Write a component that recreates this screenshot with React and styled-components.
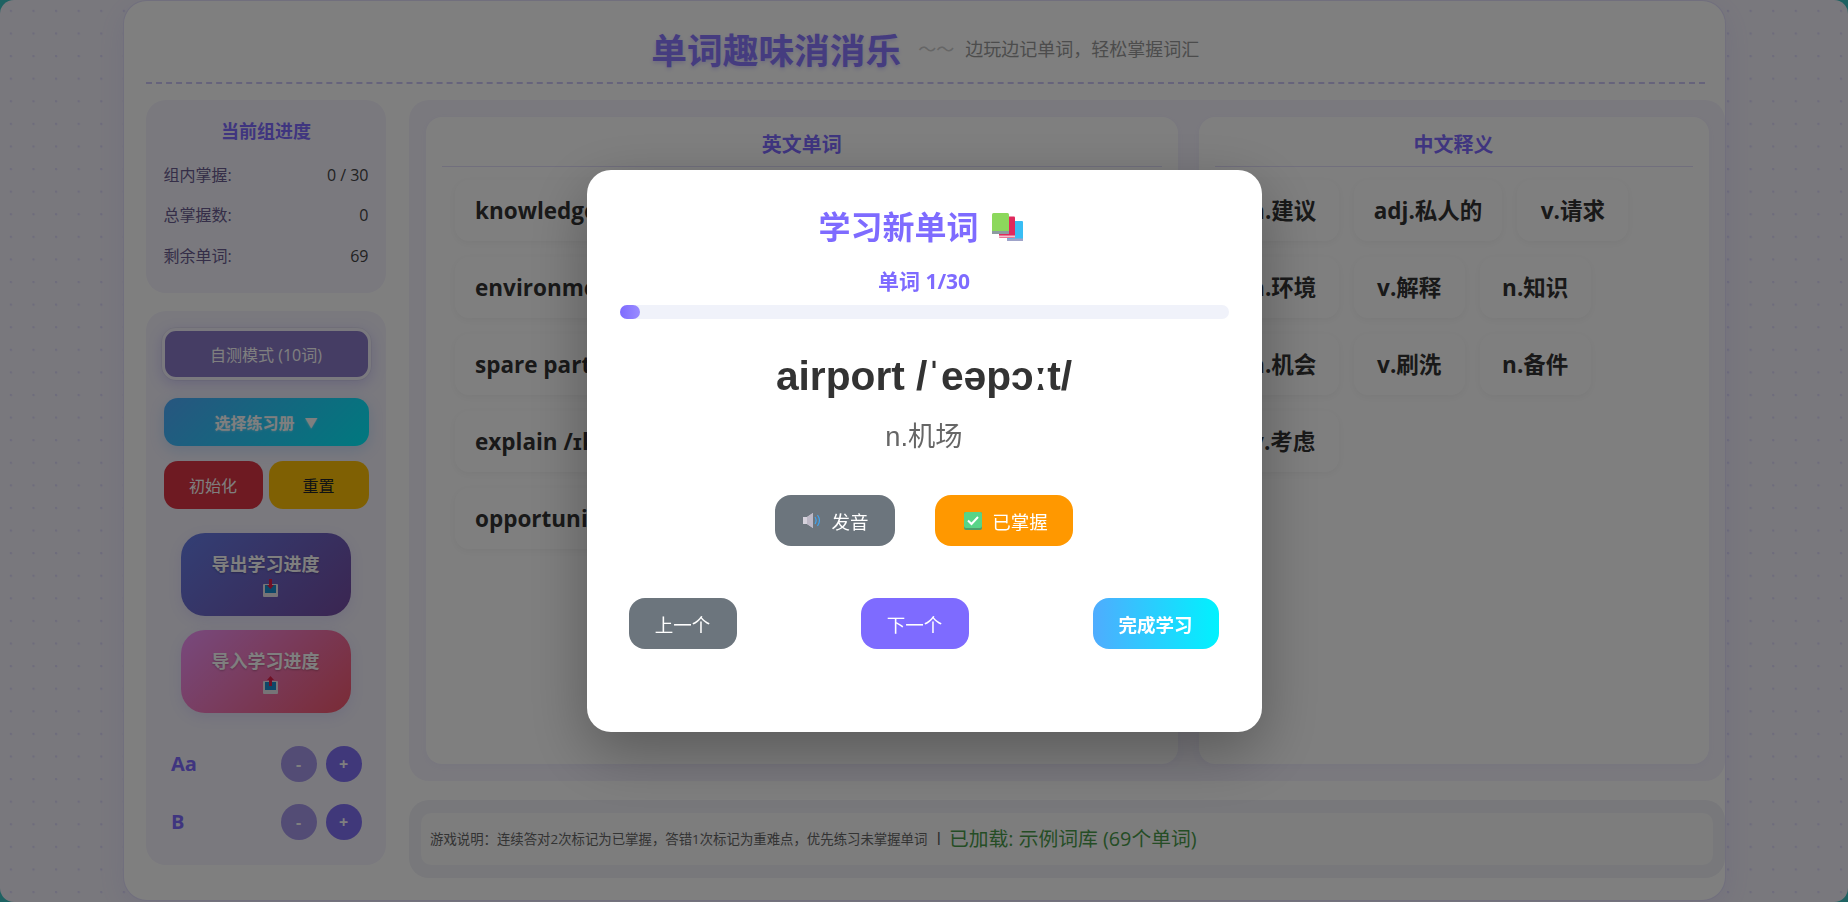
import styled, { createGlobalStyle } from 'styled-components';

const GlobalStyle = createGlobalStyle`
  html, body {
    margin: 0;
    height: 100%;
    overflow: hidden;
    background: #3cc4c4;
  }
  * { box-sizing: border-box; }
  body {
    font-family: "Open Sans", "Noto Sans CJK SC", sans-serif;
  }
`;

const Page = styled.div`
  height: 902px;
  border-radius: 14px;
  overflow: hidden;
  background-color: #f3f1fb;
  background-image: radial-gradient(circle at 11px 11px, rgba(108, 92, 231, 0.16) 1px, transparent 1.5px);
  background-size: 22.6px 22.6px;
`;

const Container = styled.div`
  width: 1603px;
  height: 901px;
  margin: 0 auto;
  padding: 0 0 0 22.5px;
  background: #fff;
  border: 1px solid rgba(108, 92, 231, 0.2);
  border-radius: 24px;
  box-shadow: 0 8px 32px rgba(108, 92, 231, 0.1);
  overflow: hidden;
`;

const Header = styled.header`
  display: flex;
  align-items: center;
  justify-content: center;
  height: 83px;
  margin-right: 20px;
  padding-top: 13px;
  border-bottom: 2px dashed rgba(108, 92, 231, 0.35);
`;

const Title = styled.h1`
  margin: 0 17px 0 0;
  font-size: 35.7px;
  font-weight: 700;
  color: #8a78ff;
  text-shadow: 0 2px 4px rgba(126, 107, 255, 0.3);
`;

const Tagline = styled.span`
  font-size: 18px;
  color: #999;
`;

const Tilde = styled.span`
  margin-right: 11px;
  font-size: 18px;
  color: #ccc;
`;

const Body = styled.div`
  display: flex;
  gap: 23px;
  margin-top: 16px;
`;

const Sidebar = styled.aside`
  display: flex;
  flex-direction: column;
  gap: 18px;
  width: 240px;
  flex-shrink: 0;
`;

const SideCard = styled.section`
  padding: ${p => p.$pad || '17px 17.5px'};
  background: #f4f2fd;
  border-radius: 20px;
`;

const SideTitle = styled.h3`
  margin: 1.5px 0 20px;
  text-align: center;
  font-size: 18px;
  line-height: 25px;
  font-weight: 700;
  color: #7e6bff;
`;

const StatRow = styled.div`
  display: flex;
  justify-content: space-between;
  margin-bottom: 18.5px;
  font-size: 16px;
  line-height: 22px;
  color: #6a5c90;

  &:last-child { margin-bottom: 9px; }

  b {
    font-weight: 400;
    color: #444;
  }
`;

const Button = styled.button`
  display: flex;
  align-items: center;
  justify-content: center;
  border: none;
  color: #fff;
  font-family: inherit;
  font-size: 16px;
  border-radius: 14px;
`;

const ModeButton = styled(Button)`
  width: 209px;
  height: 52px;
  margin: 0 0 18px -2px;
  background: #8a7ac8;
  border: 3px solid #f4f2fd;
  outline: 1px solid rgba(0, 0, 0, 0.04);
  box-shadow: 0 4px 14px rgba(108, 92, 231, 0.25);
`;

const BookButton = styled(Button)`
  width: 205px;
  height: 48px;
  gap: 10px;
  font-weight: 700;
  background: linear-gradient(135deg, #4facfe, #00f2fe);
  box-shadow: 0 4px 14px rgba(79, 172, 254, 0.25);
  text-shadow: 0 1px 2px rgba(255, 255, 255, 0.3);
`;

const Arrow = styled.span`
  font-size: 13px;
`;

const SmallRow = styled.div`
  display: flex;
  justify-content: space-between;
  margin-top: 15px;
`;

const SmallButton = styled(Button)`
  width: ${p => p.$w}px;
  height: 48px;
  font-size: 16px;
  background: ${p => p.$bg};
  color: ${p => p.$fg};
`;

const Transfer = styled(Button)`
  flex-direction: column;
  width: 170px;
  height: 83px;
  margin: ${p => p.$m};
  padding-top: 2px;
  border-radius: 24px;
  font-size: 18px;
  font-weight: 700;
  line-height: 25px;
  background: ${p => p.$bg};
  text-shadow: 0 1px 2px rgba(0, 0, 0, 0.25);
  box-shadow: 0 4px 14px rgba(108, 92, 231, 0.12);

  svg { margin: 2px 0 0 10px; }
`;

const FontRow = styled.div`
  display: flex;
  align-items: center;
  justify-content: space-between;
  margin-top: ${p => p.$top}px;
  padding: 0 7px 0 7.5px;
`;

const FontLabel = styled.span`
  font-size: 20px;
  font-weight: 700;
  color: #7e6bff;
`;

const Circles = styled.div`
  display: flex;
  gap: 9px;
`;

const Circle = styled.button`
  width: 36px;
  height: 36px;
  padding: 0;
  border: none;
  border-radius: 50%;
  color: #fff;
  font-family: inherit;
  font-size: 16px;
  font-weight: 700;
  background: ${p => (p.$minus ? '#a698ea' : '#8170f5')};
`;

const MainColumn = styled.main`
  flex: 1;
  display: flex;
  flex-direction: column;
  gap: 18px;
  min-width: 0;
`;

const GameArea = styled.section`
  display: flex;
  gap: 21px;
  height: 681px;
  padding: 17px 16px 17px 17px;
  background: #f5f3fd;
  border-radius: 20px;
`;

const WordPanel = styled.div`
  flex: ${p => p.$flex} 0 0;
  min-width: 0;
  padding: 0 16px;
  background: #fff;
  border-radius: 16px;
  box-shadow: 0 2px 10px rgba(108, 92, 231, 0.05);
`;

const PanelTitle = styled.h3`
  margin: 0;
  height: 50px;
  padding-top: 13px;
  text-align: center;
  font-size: 20px;
  line-height: 30px;
  font-weight: 700;
  color: #7e6bff;
  border-bottom: 1px solid rgba(108, 92, 231, 0.2);
`;

const CardList = styled.div`
  display: flex;
  flex-wrap: wrap;
  gap: 16px 15px;
  padding: 13px 13px 0;
`;

const WordCard = styled.div`
  min-width: 111px;
  padding: 15px 20px;
  text-align: center;
  font-size: 22.5px;
  line-height: 31px;
  font-weight: 700;
  color: #333;
  background: #fff;
  border-radius: 14px;
  box-shadow: 0 2px 10px rgba(0, 0, 0, 0.05);
`;

const Footer = styled.section`
  margin-top: 1px;
  padding: 13px 12px;
  background: #f0f1f6;
  border-radius: 20px;
`;

const FooterInner = styled.div`
  display: flex;
  align-items: center;
  height: 52px;
  padding: 0 0 3px 9px;
  background: #fafafb;
  border-radius: 10px;
`;

const Help = styled.span`
  font-size: 13.4px;
  color: #666;
`;

const Divider = styled.span`
  margin: 0 7px 0 8px;
  font-size: 12px;
  font-weight: 700;
  color: #555;
`;

const Loaded = styled.span`
  font-size: 19.8px;
  color: #4a9a4a;
`;

const Overlay = styled.div`
  position: fixed;
  inset: 0;
  display: flex;
  align-items: center;
  justify-content: center;
  background: rgba(0, 0, 0, 0.5);
`;

const Modal = styled.div`
  width: 675px;
  height: 562px;
  padding: 31px 33px 0;
  background: #fff;
  border-radius: 24px;
  box-shadow: 0 20px 60px rgba(0, 0, 0, 0.3);
`;

const ModalTitle = styled.h2`
  display: flex;
  align-items: center;
  justify-content: center;
  gap: 13px;
  margin: 0;
  height: 48px;
  padding-right: 7px;
  font-size: 32px;
  font-weight: 700;
  color: #7e6bff;

  svg { margin-top: 4px; }
`;

const Counter = styled.div`
  margin-top: 19px;
  text-align: center;
  font-size: 21px;
  line-height: 26px;
  font-weight: 700;
  color: #7e6bff;
`;

const Track = styled.div`
  height: 14px;
  margin-top: 11px;
  background: #f0f2fa;
  border-radius: 7px;
`;

const Fill = styled.div`
  height: 100%;
  background: linear-gradient(90deg, #7e6bff, #9a8cff);
  border-radius: 7px;
`;

const WordText = styled.div`
  margin-top: 29px;
  text-align: center;
  font-family: "Liberation Sans", "Noto Sans CJK SC", sans-serif;
  font-size: 40.7px;
  line-height: 56px;
  font-weight: 700;
  color: #333;
`;

const Meaning = styled.div`
  margin-top: 14px;
  text-align: center;
  font-family: "Liberation Sans", "Noto Sans CJK SC", sans-serif;
  font-size: 27.3px;
  line-height: 38px;
  color: #666;
`;

const ActionRow = styled.div`
  display: flex;
  justify-content: center;
  gap: 40px;
  margin-top: 39px;
`;

const NavRow = styled.div`
  display: flex;
  justify-content: space-between;
  margin: 52px 10px 0 9px;
`;

const ModalButton = styled(Button)`
  gap: 10px;
  width: ${p => p.$w}px;
  height: 51px;
  padding: 0 0 0 ${p => p.$shift || 0}px;
  font-size: 18.5px;
  font-weight: ${p => (p.$bold ? 700 : 400)};
  background: ${p => p.$bg};
  border-radius: 16px;
`;

const BooksIcon = () => (
  <svg width="31" height="28" viewBox="0 0 31 28">
    <rect x="15" y="8" width="16" height="20" rx="1" fill="#38bdf4" />
    <rect x="15" y="25.500" width="16" height="2.500" fill="#9fa3c9" />
    <rect x="7" y="3.500" width="16" height="21.500" rx="1" fill="#e0295c" />
    <rect x="7" y="22.500" width="16" height="2" fill="#f2c4d0" />
    <rect x="0" y="0" width="17" height="21" rx="1.500" fill="#8cd85c" />
    <rect x="0" y="18" width="17" height="3" fill="#8d9ba0" />
  </svg>
);

const SpeakerIcon = () => (
  <svg width="18" height="15" viewBox="0 0 18 15">
    <path d="M0 4h4l6-4v15l-6-4H0z" fill="#d6d2dc" />
    <path d="M4 4l6-4v15l-6-4z" fill="#bdb8c6" />
    <path d="M12 4c1.400 2.200 1.400 4.800 0 7M14.500 2c2.400 3.400 2.400 7.600 0 11" fill="none" stroke="#3fa4f0" strokeWidth="1.200" />
  </svg>
);

const CheckIcon = () => (
  <svg width="18" height="18" viewBox="0 0 18 18">
    <rect x="0" y="0" width="18" height="18" rx="2" fill="#4f9f6b" />
    <rect x="0" y="0" width="18" height="16" rx="2" fill="#58d488" />
    <path d="M4 8.500l3.500 3.500L14 5" fill="none" stroke="#fff" strokeWidth="2" />
  </svg>
);

const TrayIcon = ({ up }) => (
  <svg width="16" height="18" viewBox="0 0 16 18">
    <rect x="0" y="5" width="15" height="13" rx="1" fill="#ece9ef" />
    <rect x="2" y="6" width="11" height="8" fill="#1a8fd0" />
    <path d={up ? 'M7.500 0L11 4H9v6H6V4H4z' : 'M6 0h3v6h2l-3.500 4L4 6h2z'} fill="#e0204a" />
  </svg>
);

const english = [
  'knowledge /ˈnɒlɪdʒ/', 'private /ˈpraɪvət/',
  'environment /ɪnˈvaɪrənmənt/', 'request /rɪˈkwest/',
  'spare parts /speə pɑːts/', 'advice /ədˈvaɪs/',
  'explain /ɪkˈspleɪn/', 'scrub /skrʌb/',
  'opportunity /ˌɒpəˈtjuːnəti/', 'consider /kənˈsɪdə/',
];

const chinese = ['n.建议', 'adj.私人的', 'v.请求', 'n.环境', 'v.解释', 'n.知识', 'n.机会', 'v.刷洗', 'n.备件', 'v.考虑'];

const stats = [
  ['组内掌握:', '0 / 30'],
  ['总掌握数:', '0'],
  ['剩余单词:', '69'],
];

export default function App() {
  return (
    <>
      <GlobalStyle />
      <Page>
        <Container>
          <Header>
            <Title>单词趣味消消乐</Title>
            <Tilde>～～</Tilde>
            <Tagline>边玩边记单词，轻松掌握词汇</Tagline>
          </Header>
          <Body>
            <Sidebar>
              <SideCard>
                <SideTitle>当前组进度</SideTitle>
                {stats.map(([label, value]) => (
                  <StatRow key={label}>
                    <span>{label}</span>
                    <b>{value}</b>
                  </StatRow>
                ))}
              </SideCard>
              <SideCard $pad="17px 17.5px 25px">
                <ModeButton>自测模式 (10词)</ModeButton>
                <BookButton>选择练习册 <Arrow>▼</Arrow></BookButton>
                <SmallRow>
                  <SmallButton $w={99} $bg="#dc3545" $fg="#fff">初始化</SmallButton>
                  <SmallButton $w={100} $bg="#ffc107" $fg="#212529">重置</SmallButton>
                </SmallRow>
                <Transfer $m="24px 0 0 17px" $bg="linear-gradient(135deg, #667eea, #764ba2)">
                  导出学习进度
                  <TrayIcon />
                </Transfer>
                <Transfer $m="14px 0 0 17px" $bg="linear-gradient(135deg, #f093fb, #f5576c)">
                  导入学习进度
                  <TrayIcon up />
                </Transfer>
                <FontRow $top={33}>
                  <FontLabel>Aa</FontLabel>
                  <Circles>
                    <Circle $minus>-</Circle>
                    <Circle>+</Circle>
                  </Circles>
                </FontRow>
                <FontRow $top={22}>
                  <FontLabel>B</FontLabel>
                  <Circles>
                    <Circle $minus>-</Circle>
                    <Circle>+</Circle>
                  </Circles>
                </FontRow>
              </SideCard>
            </Sidebar>
            <MainColumn>
              <GameArea>
                <WordPanel $flex={720}>
                  <PanelTitle>英文单词</PanelTitle>
                  <CardList>
                    {english.map(word => <WordCard key={word}>{word}</WordCard>)}
                  </CardList>
                </WordPanel>
                <WordPanel $flex={478}>
                  <PanelTitle>中文释义</PanelTitle>
                  <CardList>
                    {chinese.map(word => <WordCard key={word}>{word}</WordCard>)}
                  </CardList>
                </WordPanel>
              </GameArea>
              <Footer>
                <FooterInner>
                  <Help>游戏说明：连续答对2次标记为已掌握，答错1次标记为重难点，优先练习未掌握单词</Help>
                  <Divider>|</Divider>
                  <Loaded>已加载: 示例词库 (69个单词)</Loaded>
                </FooterInner>
              </Footer>
            </MainColumn>
          </Body>
        </Container>
      </Page>
      <Overlay>
        <Modal>
          <ModalTitle>学习新单词 <BooksIcon /></ModalTitle>
          <Counter>单词 1/30</Counter>
          <Track>
            <Fill style={{ width: `${(1 / 30) * 100 + 0.1}%` }} />
          </Track>
          <WordText>airport /ˈeəpɔːt/</WordText>
          <Meaning>n.机场</Meaning>
          <ActionRow>
            <ModalButton $w={120} $shift={2} $bg="#6c757d"><SpeakerIcon /> 发音</ModalButton>
            <ModalButton $w={138} $shift={4} $bg="#ff9800"><CheckIcon /> 已掌握</ModalButton>
          </ActionRow>
          <NavRow>
            <ModalButton $w={108} $bg="#6c757d">上一个</ModalButton>
            <ModalButton $w={108} $bg="#7e6bff">下一个</ModalButton>
            <ModalButton $w={126} $bold $bg="linear-gradient(90deg, #4facfe, #00f2fe)">完成学习</ModalButton>
          </NavRow>
        </Modal>
      </Overlay>
    </>
  );
}
